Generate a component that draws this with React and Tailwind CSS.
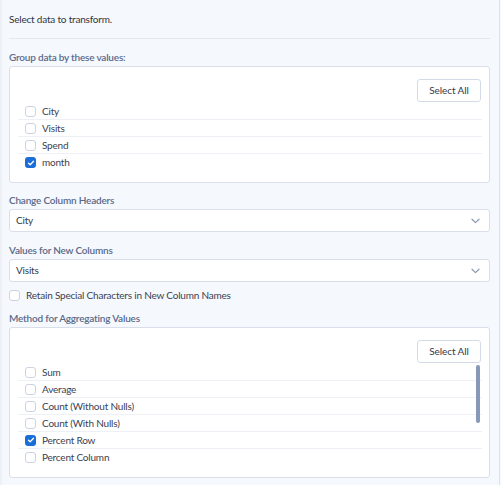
import React from "react";

const font = { fontFamily: 'Lato, "Noto Sans", sans-serif' };

function Check({ checked }) {
  if (checked) {
    return (
      <span className="flex h-[11px] w-[11px] shrink-0 items-center justify-center rounded-[3px] bg-[#1a6ed8]">
        <svg width="8" height="8" viewBox="0 0 8 8" fill="none">
          <path d="M1.5 4.2 L3.2 5.8 L6.5 2.3" stroke="white" strokeWidth="1.3" strokeLinecap="round" strokeLinejoin="round" />
        </svg>
      </span>
    );
  }
  return <span className="h-[11px] w-[11px] shrink-0 rounded-[3px] border border-[#ccd3e0] bg-white" />;
}

function Label({ children, className = "" }) {
  return (
    <div className={"h-[16px] text-[10px] leading-[16px] font-semibold tracking-[-0.2px] text-[#5a6a8a] " + className}>{children}</div>
  );
}

function CheckList({ items, scroll }) {
  return (
    <div className="relative rounded-[3px] border border-[#d9dfea] bg-white pb-[11px]">
      <div className="flex justify-end pt-[12px] pr-[8px]">
        <button className="h-[23px] w-[64px] rounded-[3px] border border-[#d4dbe8] bg-white text-[10px] tracking-[-0.1px] text-[#333a47]">
          Select All
        </button>
      </div>
      <div className="ml-[8px] mr-[7px] pt-px">
        {items.map((it, i) => (
          <div
            key={it.label}
            className={
              "flex h-[17px] items-center gap-[6px] pl-[7px] text-[10px] tracking-[-0.2px] text-[#3b4150] " +
              (i < items.length - 1 ? "border-b border-[#edf0f5]" : "")
            }
          >
            <Check checked={it.checked} />
            <span>{it.label}</span>
          </div>
        ))}
      </div>
      {scroll && <div className="absolute right-[9px] top-[37px] h-[58px] w-[4px] rounded-full bg-[#8798b8]" />}
    </div>
  );
}

function Select({ value }) {
  return (
    <div className="flex h-[23px] items-center justify-between rounded-[3px] border border-[#d9dfea] bg-white pl-[6px] pr-[9px] text-[10px] tracking-[-0.2px] text-[#333a47]">
      <span>{value}</span>
      <svg width="9" height="6" viewBox="0 0 9 6" fill="none">
        <path d="M1 1.2 L4.5 4.6 L8 1.2" stroke="#8a97b3" strokeWidth="1.2" strokeLinecap="round" strokeLinejoin="round" />
      </svg>
    </div>
  );
}

export default function App() {
  return (
    <div className="h-[485px] w-[501px] bg-[#f5f8fd]" style={font}>
      <div className="h-[485px] w-[500px] border-r border-[#dde3ee] px-[9px] shadow-[inset_3px_0_3px_-2px_rgba(0,0,0,0.06)]">
        <div className="flex h-[38px] items-center text-[10px] tracking-[-0.2px] text-[#2f3542]">Select data to transform.</div>
        <div className="h-px bg-[#e3e8f0]" />
        <Label className="mt-[10px]">Group data by these values:</Label>
        <div className="mt-px">
          <CheckList
            items={[
              { label: "City" },
              { label: "Visits" },
              { label: "Spend" },
              { label: "month", checked: true },
            ]}
          />
        </div>
        <Label className="mt-[9px]">Change Column Headers</Label>
        <div className="mt-px">
          <Select value="City" />
        </div>
        <Label className="mt-[10px]">Values for New Columns</Label>
        <div className="mt-px">
          <Select value="Visits" />
        </div>
        <div className="mt-[5px] flex h-[16px] items-center gap-[6px] text-[10px] tracking-[-0.2px] text-[#3b4150]">
          <Check />
          <span>Retain Special Characters in New Column Names</span>
        </div>
        <Label className="mt-[7px]">Method for Aggregating Values</Label>
        <div className="mt-[1px]">
          <CheckList
            scroll
            items={[
              { label: "Sum" },
              { label: "Average" },
              { label: "Count (Without Nulls)" },
              { label: "Count (With Nulls)" },
              { label: "Percent Row", checked: true },
              { label: "Percent Column" },
            ]}
          />
        </div>
      </div>
    </div>
  );
}
